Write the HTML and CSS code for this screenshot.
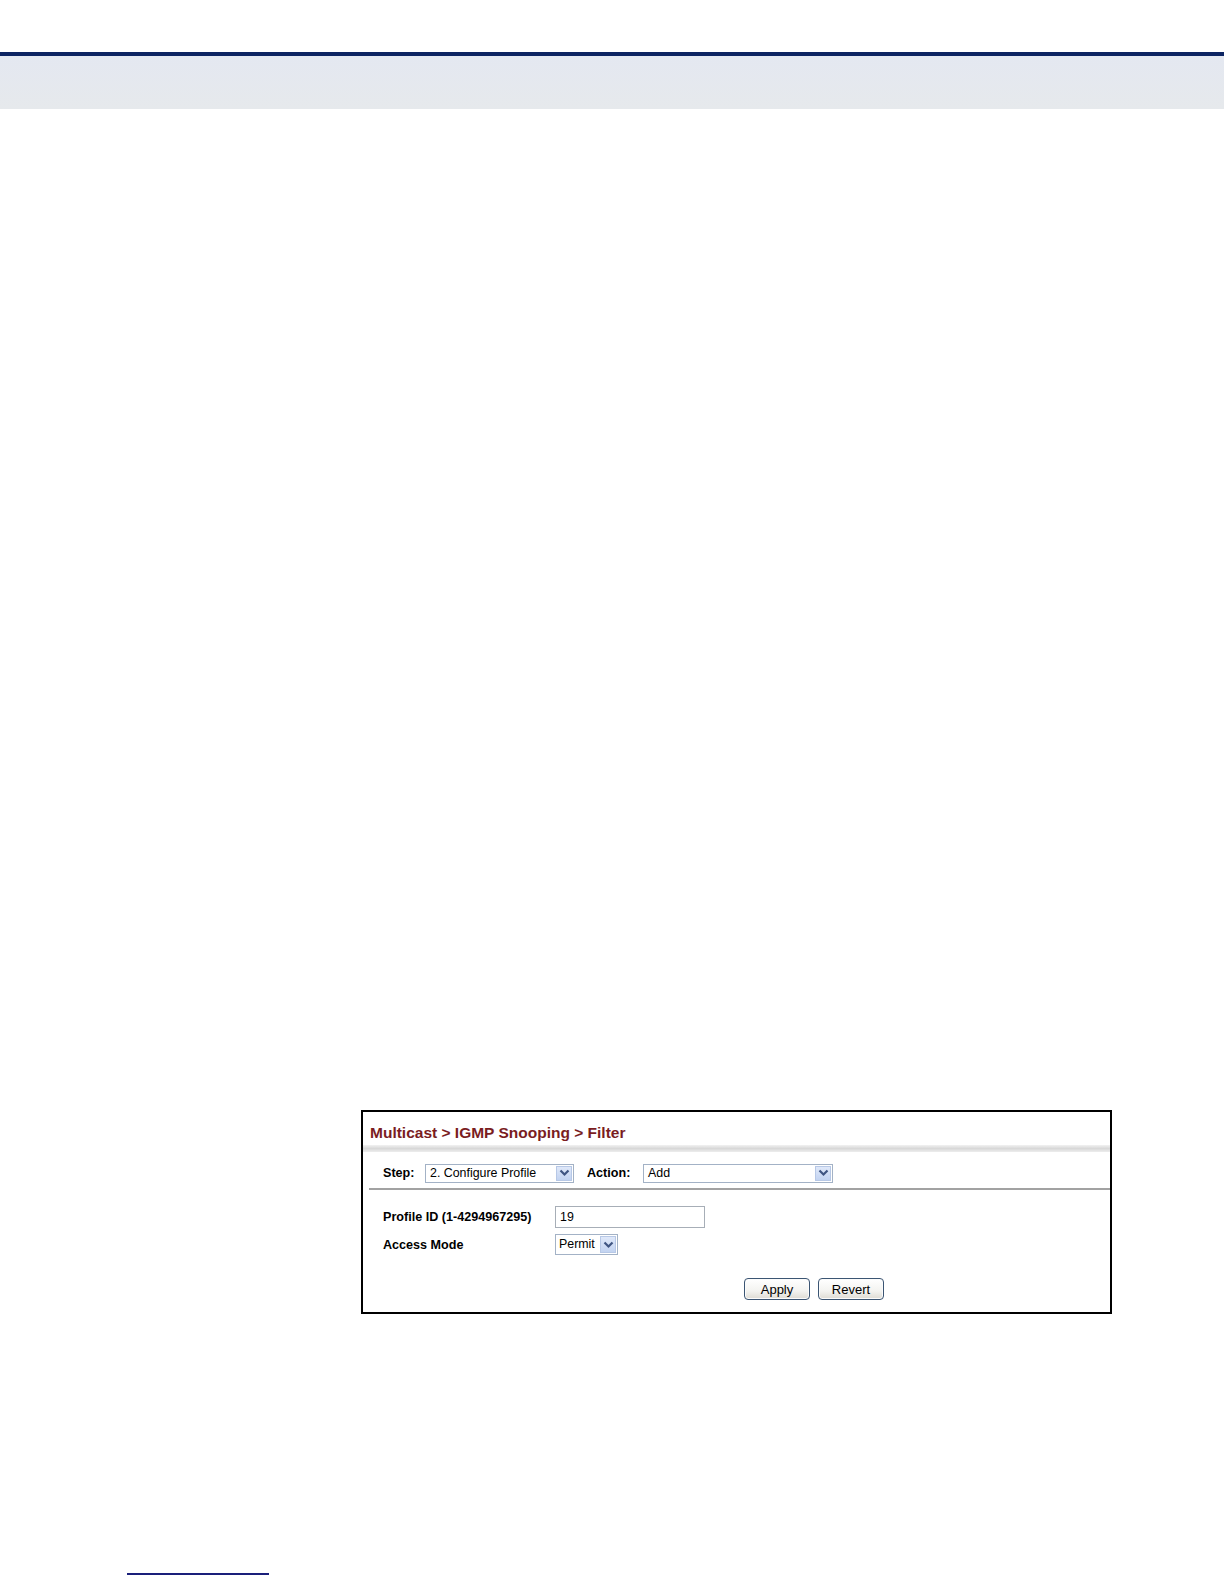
FILE: index.html
```html
<!DOCTYPE html>
<html lang="en">
<head>
<meta charset="utf-8">
<title>Multicast &gt; IGMP Snooping &gt; Filter</title>
<link rel="stylesheet" href="styles.css">
</head>
<body>
<header class="doc-top">
  <div class="doc-rule"></div>
  <div class="doc-band"></div>
</header>
<main class="content">
  <div class="panel">
    <div class="panel-title">Multicast &gt; IGMP Snooping &gt; Filter</div>
    <div class="title-shade"></div>
    <div class="step-row">
      <span class="lbl">Step:</span>
      <div class="select step-select">
        <span class="select-text">2. Configure Profile</span>
        <span class="select-btn"><svg width="11" height="8" viewBox="0 0 11 8"><path d="M1.5 1.5 L5.5 5.5 L9.5 1.5" fill="none" stroke="#3f5582" stroke-width="2.2"/></svg></span>
      </div>
      <span class="lbl action-lbl">Action:</span>
      <div class="select action-select">
        <span class="select-text">Add</span>
        <span class="select-btn"><svg width="11" height="8" viewBox="0 0 11 8"><path d="M1.5 1.5 L5.5 5.5 L9.5 1.5" fill="none" stroke="#3f5582" stroke-width="2.2"/></svg></span>
      </div>
    </div>
    <div class="sep"></div>
    <div class="form">
      <div class="form-row">
        <span class="lbl form-lbl">Profile ID (1-4294967295)</span>
        <div class="textbox">19</div>
      </div>
      <div class="form-row">
        <span class="lbl form-lbl">Access Mode</span>
        <div class="select mode-select">
          <span class="select-text">Permit</span>
          <span class="select-btn"><svg width="11" height="8" viewBox="0 0 11 8"><path d="M1.5 1.5 L5.5 5.5 L9.5 1.5" fill="none" stroke="#3f5582" stroke-width="2.2"/></svg></span>
        </div>
      </div>
    </div>
    <div class="buttons">
      <button class="btn" type="button">Apply</button>
      <button class="btn" type="button">Revert</button>
    </div>
  </div>
</main>
<footer class="doc-foot">
  <div class="foot-rule"></div>
</footer>
</body>
</html>
```
FILE: styles.css
```css
html, body {
  margin: 0;
  padding: 0;
  background: #ffffff;
}
body {
  font-family: "Liberation Sans", Arial, sans-serif;
  color: #000;
}
.doc-top {
  padding-top: 52px;
}
.doc-rule {
  height: 4px;
  background: #0c2462;
}
.doc-band {
  height: 53px;
  background: linear-gradient(#e4e8f1, #e6e9ec);
}
.content {
  padding-top: 1001px;
}
.panel {
  margin-left: 361px;
  width: 747px;
  border: 2px solid #000;
  background: #fff;
}
.panel-title {
  padding: 12px 0 3px 7px;
  height: 18px;
  line-height: 18px;
  font-size: 15.5px;
  font-weight: bold;
  color: #7a1d1f;
}
.title-shade {
  height: 7px;
  background: linear-gradient(#f2f2f2, #d8d8d8 50%, #ededed);
}
.step-row {
  display: flex;
  align-items: center;
  height: 20px;
  padding: 11px 0 5px 20px;
}
.lbl {
  font-size: 12.6px;
  font-weight: bold;
  white-space: nowrap;
}
.step-row .lbl:first-child {
  width: 42px;
}
.action-lbl {
  margin-left: 13px;
  width: 56px;
}
.select {
  box-sizing: border-box;
  display: flex;
  align-items: stretch;
  border: 1px solid #a3b2c6;
  background: #fff;
  height: 19px;
}
.select-text {
  flex: 1;
  font-size: 12.4px;
  line-height: 17px;
  padding-left: 4px;
  white-space: nowrap;
}
.select-btn {
  width: 16px;
  margin: 1px;
  display: flex;
  align-items: center;
  justify-content: center;
  background: linear-gradient(#dfe8f9, #c2d3f1);
  border: 1px solid #b7c8e6;
  box-sizing: border-box;
}
.step-select {
  width: 149px;
}
.action-select {
  width: 190px;
}
.sep {
  margin-left: 6px;
  height: 2px;
  background: #a2a2a2;
}
.form {
  padding: 16px 0 0 20px;
  display: flex;
  flex-direction: column;
  gap: 6px;
}
.form-row {
  display: flex;
  align-items: center;
}
.form-lbl {
  width: 172px;
}
.textbox {
  box-sizing: border-box;
  width: 150px;
  height: 22px;
  border: 1px solid #a7aeb7;
  font-size: 12.4px;
  line-height: 20px;
  padding-left: 4px;
}
.mode-select {
  width: 63px;
  height: 21px;
}
.mode-select .select-text {
  line-height: 19px;
  padding-left: 3px;
}
.buttons {
  display: flex;
  gap: 8px;
  padding: 23px 0 12px 381px;
}
.btn {
  box-sizing: border-box;
  width: 66px;
  height: 22px;
  padding: 0;
  font-family: "Liberation Sans", Arial, sans-serif;
  font-size: 13px;
  color: #000;
  border: 1px solid #3b5573;
  border-radius: 4px;
  background: linear-gradient(#ffffff, #f3f3f0 60%, #dedbd3);
  box-shadow: inset 0 0 0 1px #fbfbfb;
}
.doc-foot {
  padding-top: 259px;
}
.foot-rule {
  margin-left: 127px;
  width: 142px;
  height: 2px;
  background: #1a1f7a;
}
```
